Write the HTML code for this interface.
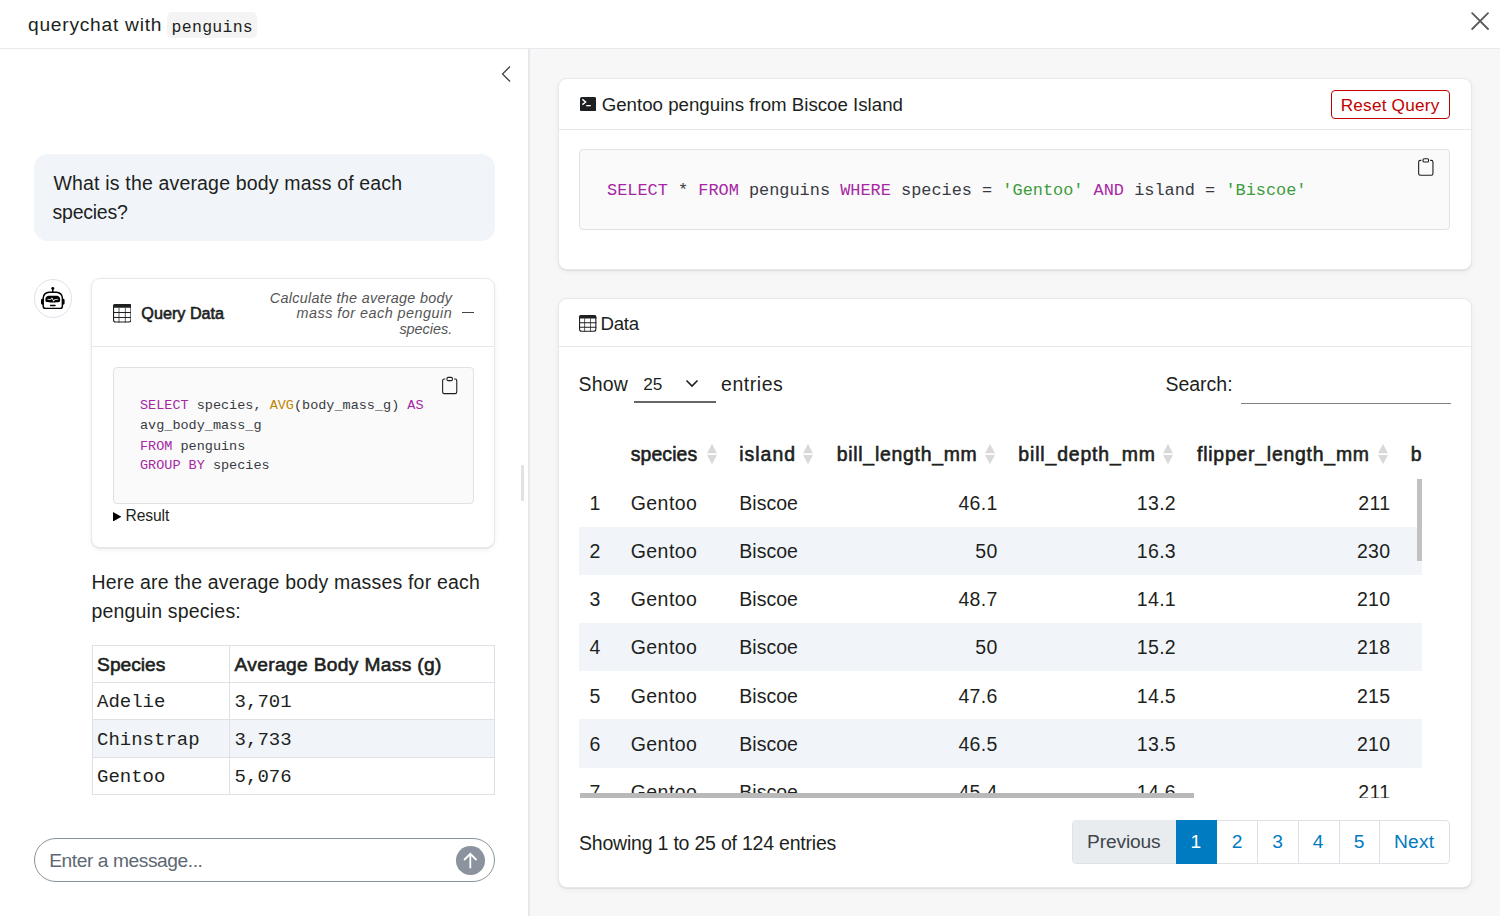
<!DOCTYPE html>
<html><head><meta charset="utf-8"><title>querychat</title>
<style>
html,body{margin:0;padding:0;}
body{width:1500px;height:916px;position:relative;overflow:hidden;background:#fff;font-family:"Liberation Sans",sans-serif;}
.t{position:absolute;white-space:nowrap;line-height:1;}
svg{display:block;}
</style></head><body>
<div style="position:absolute;left:0px;top:0px;width:1500px;height:49px;box-sizing:border-box;background:#fff;border-bottom:1px solid #e6eaee;"></div>
<div class="t" style="left:28px;top:14.75px;font-size:19.2px;color:#1d1f21;font-weight:400;font-family:'Liberation Sans', sans-serif;letter-spacing:0.75px;">querychat with</div>
<div style="position:absolute;left:167px;top:12.1px;width:90px;height:26.4px;box-sizing:border-box;background:#f4f4f4;border-radius:5px;"></div>
<div class="t" style="left:171.6px;top:19.65px;font-size:16.5px;color:#1d1f21;font-weight:400;font-family:'Liberation Mono', monospace;letter-spacing:0.28px;">penguins</div>
<svg style="position:absolute;left:1470.5px;top:12px;" width="18" height="18" viewBox="0 0 18 18"><path d="M1.2 1.2L17 17M17 1.2L1.2 17" stroke="#5a5a5a" stroke-width="1.8" fill="none" stroke-linecap="round"/></svg>
<div style="position:absolute;left:0px;top:49px;width:529px;height:867px;box-sizing:border-box;background:#fff;"></div>
<svg style="position:absolute;left:500px;top:65px;" width="12" height="18" viewBox="0 0 12 18"><path d="M10 1.5L2.5 9L10 16.5" stroke="#444" stroke-width="1.3" fill="none"/></svg>
<div style="position:absolute;left:34px;top:154px;width:460.5px;height:86.5px;box-sizing:border-box;background:#f1f5f9;border-radius:14px;"></div>
<div class="t" style="left:53.5px;top:173.99px;font-size:19.5px;color:#1d1f21;font-weight:400;font-family:'Liberation Sans', sans-serif;letter-spacing:0.17px;">What is the average body mass of each</div>
<div class="t" style="left:52.5px;top:202.99px;font-size:19.5px;color:#1d1f21;font-weight:400;font-family:'Liberation Sans', sans-serif;letter-spacing:-0.23px;">species?</div>
<div style="position:absolute;left:34px;top:279.4px;width:38.2px;height:38.2px;box-sizing:border-box;border:1px solid #dde3ea;border-radius:50%;background:#fff;"></div>
<svg style="position:absolute;left:41.2px;top:286.8px;fill:#000;" width="23.6" height="23.6" viewBox="0 0 16 16"><path d="M6 12.5a.5.5 0 0 1 .5-.5h3a.5.5 0 0 1 0 1h-3a.5.5 0 0 1-.5-.5M3 8.062C3 6.76 4.235 5.765 5.53 5.886a26.6 26.6 0 0 0 4.94 0C11.765 5.765 13 6.76 13 8.062v1.157a.93.93 0 0 1-.765.935c-.845.147-2.34.346-4.235.346s-3.39-.2-4.235-.346A.93.93 0 0 1 3 9.219zm4.542-.827a.25.25 0 0 0-.217.068l-.92.9a25 25 0 0 1-1.871-.183.25.25 0 0 0-.068.495c.55.076 1.232.149 2.02.193a.25.25 0 0 0 .189-.071l.754-.736.847 1.71a.25.25 0 0 0 .404.062l.932-.97a25 25 0 0 0 1.922-.188.25.25 0 0 0-.068-.495c-.538.074-1.207.145-1.98.189a.25.25 0 0 0-.166.076l-.754.785-.842-1.7a.25.25 0 0 0-.182-.135"/><path d="M8.5 1.866a1 1 0 1 0-1 0V3h-2A4.5 4.5 0 0 0 1 7.5V8a1 1 0 0 0-1 1v2a1 1 0 0 0 1 1v1a2 2 0 0 0 2 2h10a2 2 0 0 0 2-2v-1a1 1 0 0 0 1-1V9a1 1 0 0 0-1-1v-.5A4.5 4.5 0 0 0 10.5 3h-2zM14 7.5V13a1 1 0 0 1-1 1H3a1 1 0 0 1-1-1V7.5A3.5 3.5 0 0 1 5.5 4h5A3.5 3.5 0 0 1 14 7.5"/></svg>
<div style="position:absolute;left:90.8px;top:278.4px;width:404.4px;height:269.8px;box-sizing:border-box;background:#fff;border:1px solid rgba(0,0,0,0.09);border-radius:9px;box-shadow:0 1px 1px rgba(0,0,0,0.07),0 2px 6px rgba(0,0,0,0.05);"></div>
<div style="position:absolute;left:91.8px;top:346px;width:402.4px;height:1px;box-sizing:border-box;background:#e8e8e8;"></div>
<svg style="position:absolute;left:112.6px;top:304px;" width="18.5" height="18.5" viewBox="0 0 18.5 18.5"><rect x="0.55" y="0.55" width="17.4" height="17.4" rx="2" fill="none" stroke="#1d1f21" stroke-width="1.1"/><path d="M0 2.2A2.2 2.2 0 0 1 2.2 0H16.3A2.2 2.2 0 0 1 18.5 2.2V3.7H0Z" fill="#1d1f21"/><rect x="5.5625" y="3.7" width="0.9" height="14.8" fill="#1d1f21" opacity="0.8"/><rect x="11.852500000000001" y="3.7" width="0.9" height="14.8" fill="#1d1f21" opacity="0.8"/><rect x="0" y="8.010000000000002" width="18.5" height="1" fill="#1d1f21"/><rect x="0" y="12.968" width="18.5" height="1" fill="#1d1f21"/></svg>
<div class="t" style="left:141.3px;top:304.89px;font-size:16.2px;color:#1d1f21;font-weight:400;font-family:'Liberation Sans', sans-serif;letter-spacing:0.0px;-webkit-text-stroke:0.6px #1d1f21;">Query Data</div>
<div class="t" style="right:1047.8px;top:291.11px;font-size:14.4px;color:#555;font-weight:400;font-style:italic;font-family:'Liberation Sans', sans-serif;letter-spacing:0.28px;">Calculate the average body</div>
<div class="t" style="right:1047.8px;top:306.41px;font-size:14.4px;color:#555;font-weight:400;font-style:italic;font-family:'Liberation Sans', sans-serif;letter-spacing:0.48px;">mass for each penguin</div>
<div class="t" style="right:1047.8px;top:322.01px;font-size:14.4px;color:#555;font-weight:400;font-style:italic;font-family:'Liberation Sans', sans-serif;letter-spacing:0.0px;">species.</div>
<div style="position:absolute;left:462.3px;top:311.9px;width:11.4px;height:1.5px;box-sizing:border-box;background:#444;"></div>
<div style="position:absolute;left:112.5px;top:367px;width:361.5px;height:136.7px;box-sizing:border-box;background:#fafafa;border:1px solid #dee2e6;border-radius:4px;"></div>
<svg style="position:absolute;left:441.2px;top:375.5px;fill:#1d1f21;" width="17.4" height="19" viewBox="0 0 16 16"><path d="M4 1.5H3a2 2 0 0 0-2 2V14a2 2 0 0 0 2 2h10a2 2 0 0 0 2-2V3.5a2 2 0 0 0-2-2h-1v1h1a1 1 0 0 1 1 1V14a1 1 0 0 1-1 1H3a1 1 0 0 1-1-1V3.5a1 1 0 0 1 1-1h1z"/><path d="M9.5 1a.5.5 0 0 1 .5.5v1a.5.5 0 0 1-.5.5h-3a.5.5 0 0 1-.5-.5v-1a.5.5 0 0 1 .5-.5zm-3-1A1.5 1.5 0 0 0 5 1.5v1A1.5 1.5 0 0 0 6.5 4h3A1.5 1.5 0 0 0 11 2.5v-1A1.5 1.5 0 0 0 9.5 0z"/></svg>
<div class="t" style="left:140px;top:399.15px;font-size:13.5px;color:#383a42;font-weight:400;font-family:'Liberation Mono', monospace;letter-spacing:0px;white-space:pre;"><span style="color:#a626a4">SELECT</span><span style="color:#383a42"> species, </span><span style="color:#c18401">AVG</span><span style="color:#383a42">(body_mass_g) </span><span style="color:#a626a4">AS</span></div>
<div class="t" style="left:140px;top:419.35px;font-size:13.5px;color:#383a42;font-weight:400;font-family:'Liberation Mono', monospace;letter-spacing:0px;white-space:pre;"><span style="color:#383a42">avg_body_mass_g</span></div>
<div class="t" style="left:140px;top:439.65px;font-size:13.5px;color:#383a42;font-weight:400;font-family:'Liberation Mono', monospace;letter-spacing:0px;white-space:pre;"><span style="color:#a626a4">FROM</span><span style="color:#383a42"> penguins</span></div>
<div class="t" style="left:140px;top:459.35px;font-size:13.5px;color:#383a42;font-weight:400;font-family:'Liberation Mono', monospace;letter-spacing:0px;white-space:pre;"><span style="color:#a626a4">GROUP BY</span><span style="color:#383a42"> species</span></div>
<svg style="position:absolute;left:112.7px;top:511.5px;" width="8.5" height="9.5" viewBox="0 0 8.5 9.5"><path d="M0 0L8.5 4.75L0 9.5Z" fill="#000"/></svg>
<div class="t" style="left:125.6px;top:508.29px;font-size:15.6px;color:#1d1f21;font-weight:400;font-family:'Liberation Sans', sans-serif;letter-spacing:-0.1px;">Result</div>
<div class="t" style="left:91.4px;top:572.99px;font-size:19.5px;color:#1d1f21;font-weight:400;font-family:'Liberation Sans', sans-serif;letter-spacing:0.2px;">Here are the average body masses for each</div>
<div class="t" style="left:91.4px;top:601.79px;font-size:19.5px;color:#1d1f21;font-weight:400;font-family:'Liberation Sans', sans-serif;letter-spacing:0.2px;">penguin species:</div>
<div style="position:absolute;left:92.3px;top:644.7px;width:402.5px;height:150px;box-sizing:border-box;border:1px solid #dee2e6;background:#fff;"></div>
<div style="position:absolute;left:92.8px;top:719.5px;width:401.5px;height:37.5px;box-sizing:border-box;background:#f1f5f9;"></div>
<div style="position:absolute;left:92.3px;top:682px;width:402.5px;height:1px;box-sizing:border-box;background:#dee2e6;"></div>
<div style="position:absolute;left:92.3px;top:719.3px;width:402.5px;height:1px;box-sizing:border-box;background:#dee2e6;"></div>
<div style="position:absolute;left:92.3px;top:756.8px;width:402.5px;height:1px;box-sizing:border-box;background:#dee2e6;"></div>
<div style="position:absolute;left:229px;top:644.7px;width:1px;height:150px;box-sizing:border-box;background:#dee2e6;"></div>
<div class="t" style="left:97.1px;top:655.05px;font-size:19.2px;color:#1d1f21;font-weight:400;font-family:'Liberation Sans', sans-serif;letter-spacing:0px;-webkit-text-stroke:0.6px #1d1f21;">Species</div>
<div class="t" style="left:234.6px;top:655.05px;font-size:19.2px;color:#1d1f21;font-weight:400;font-family:'Liberation Sans', sans-serif;letter-spacing:0.33px;-webkit-text-stroke:0.6px #1d1f21;">Average Body Mass (g)</div>
<div class="t" style="left:97px;top:693.44px;font-size:19px;color:#1d1f21;font-weight:400;font-family:'Liberation Mono', monospace;letter-spacing:0px;">Adelie</div>
<div class="t" style="left:234.6px;top:693.44px;font-size:19px;color:#1d1f21;font-weight:400;font-family:'Liberation Mono', monospace;letter-spacing:0px;">3,701</div>
<div class="t" style="left:97px;top:730.74px;font-size:19px;color:#1d1f21;font-weight:400;font-family:'Liberation Mono', monospace;letter-spacing:0px;">Chinstrap</div>
<div class="t" style="left:234.6px;top:730.74px;font-size:19px;color:#1d1f21;font-weight:400;font-family:'Liberation Mono', monospace;letter-spacing:0px;">3,733</div>
<div class="t" style="left:97px;top:768.04px;font-size:19px;color:#1d1f21;font-weight:400;font-family:'Liberation Mono', monospace;letter-spacing:0px;">Gentoo</div>
<div class="t" style="left:234.6px;top:768.04px;font-size:19px;color:#1d1f21;font-weight:400;font-family:'Liberation Mono', monospace;letter-spacing:0px;">5,076</div>
<div style="position:absolute;left:34px;top:838px;width:460.7px;height:44px;box-sizing:border-box;border:1px solid #8a939c;border-radius:22px;background:#fff;"></div>
<div class="t" style="left:49.2px;top:851.05px;font-size:19.2px;color:#5d6873;font-weight:400;font-family:'Liberation Sans', sans-serif;letter-spacing:-0.43px;">Enter a message...</div>
<div style="position:absolute;left:456.4px;top:846.2px;width:28.6px;height:28.6px;box-sizing:border-box;background:#8b949e;border-radius:50%;"></div>
<svg style="position:absolute;left:456.4px;top:846.2px;" width="28.6" height="28.6" viewBox="0 0 28.6 28.6"><path d="M14.3 21.5V8M8.6 13.5L14.3 7.8L20 13.5" stroke="#fff" stroke-width="1.8" fill="none" stroke-linecap="round"/></svg>
<div style="position:absolute;left:521.3px;top:465px;width:2.4px;height:35.7px;box-sizing:border-box;background:#e2e2e2;border-radius:1.2px;"></div>
<div style="position:absolute;left:529px;top:49px;width:971px;height:867px;box-sizing:border-box;background:#f7f7f7;"></div>
<div style="position:absolute;left:528.4px;top:49px;width:1.4px;height:867px;box-sizing:border-box;background:#e6e9ec;"></div>
<div style="position:absolute;left:558px;top:77.8px;width:914px;height:192.2px;box-sizing:border-box;background:#fff;border:1px solid rgba(0,0,0,0.09);border-radius:9px;box-shadow:0 1px 1px rgba(0,0,0,0.07),0 2px 6px rgba(0,0,0,0.05);"></div>
<div style="position:absolute;left:559px;top:129px;width:912px;height:1px;box-sizing:border-box;background:#e8e8e8;"></div>
<svg style="position:absolute;left:579.8px;top:96.8px;" width="16.2" height="14.4" viewBox="0 0 16.2 14.4"><rect x="0" y="0" width="16.2" height="14.4" rx="2" fill="#1d1f21"/><path d="M2.4 2.4L5.6 5L2.4 7.6" stroke="#fff" stroke-width="1.4" fill="none"/><rect x="6.2" y="8" width="4.6" height="1.3" fill="#fff"/></svg>
<div class="t" style="left:601.7px;top:95.87px;font-size:18.7px;color:#1d1f21;font-weight:400;font-family:'Liberation Sans', sans-serif;letter-spacing:0px;">Gentoo penguins from Biscoe Island</div>
<div style="position:absolute;left:1331.3px;top:90.2px;width:118.7px;height:28.5px;box-sizing:border-box;border:1px solid #c10000;border-radius:4px;"></div>
<div class="t" style="left:1340.7px;top:96.94px;font-size:17.2px;color:#c10000;font-weight:400;font-family:'Liberation Sans', sans-serif;letter-spacing:0.21px;">Reset Query</div>
<div style="position:absolute;left:579.3px;top:149px;width:870.7px;height:81px;box-sizing:border-box;background:#fafafa;border:1px solid #dee2e6;border-radius:4px;"></div>
<svg style="position:absolute;left:1417.4px;top:157px;fill:#1d1f21;" width="17.6" height="20" viewBox="0 0 16 16"><path d="M4 1.5H3a2 2 0 0 0-2 2V14a2 2 0 0 0 2 2h10a2 2 0 0 0 2-2V3.5a2 2 0 0 0-2-2h-1v1h1a1 1 0 0 1 1 1V14a1 1 0 0 1-1 1H3a1 1 0 0 1-1-1V3.5a1 1 0 0 1 1-1h1z"/><path d="M9.5 1a.5.5 0 0 1 .5.5v1a.5.5 0 0 1-.5.5h-3a.5.5 0 0 1-.5-.5v-1a.5.5 0 0 1 .5-.5zm-3-1A1.5 1.5 0 0 0 5 1.5v1A1.5 1.5 0 0 0 6.5 4h3A1.5 1.5 0 0 0 11 2.5v-1A1.5 1.5 0 0 0 9.5 0z"/></svg>
<div class="t" style="left:607px;top:182.55px;font-size:16.9px;color:#383a42;font-weight:400;font-family:'Liberation Mono', monospace;letter-spacing:0px;white-space:pre;"><span style="color:#a626a4">SELECT</span><span style="color:#383a42"> * </span><span style="color:#a626a4">FROM</span><span style="color:#383a42"> penguins </span><span style="color:#a626a4">WHERE</span><span style="color:#383a42"> species = </span><span style="color:#3d9c3d">'Gentoo'</span><span style="color:#383a42"> </span><span style="color:#a626a4">AND</span><span style="color:#383a42"> island = </span><span style="color:#3d9c3d">'Biscoe'</span></div>
<div style="position:absolute;left:558px;top:297.8px;width:914px;height:589.9px;box-sizing:border-box;background:#fff;border:1px solid rgba(0,0,0,0.09);border-radius:9px;box-shadow:0 1px 1px rgba(0,0,0,0.07),0 2px 6px rgba(0,0,0,0.05);"></div>
<div style="position:absolute;left:559px;top:346px;width:912px;height:1px;box-sizing:border-box;background:#e8e8e8;"></div>
<svg style="position:absolute;left:579.4px;top:315px;" width="17.4" height="16.8" viewBox="0 0 17.4 16.8"><rect x="0.55" y="0.55" width="16.299999999999997" height="15.700000000000001" rx="2" fill="none" stroke="#1d1f21" stroke-width="1.1"/><path d="M0 2.2A2.2 2.2 0 0 1 2.2 0H15.2A2.2 2.2 0 0 1 17.4 2.2V3.4H0Z" fill="#1d1f21"/><rect x="5.204999999999999" y="3.4" width="0.9" height="13.4" fill="#1d1f21" opacity="0.8"/><rect x="11.121" y="3.4" width="0.9" height="13.4" fill="#1d1f21" opacity="0.8"/><rect x="0" y="7.255000000000001" width="17.4" height="1" fill="#1d1f21"/><rect x="0" y="11.744000000000002" width="17.4" height="1" fill="#1d1f21"/></svg>
<div class="t" style="left:600.4px;top:315.17px;font-size:18.7px;color:#1d1f21;font-weight:400;font-family:'Liberation Sans', sans-serif;letter-spacing:-0.23px;">Data</div>
<div class="t" style="left:578.6px;top:374.99px;font-size:19.5px;color:#1d1f21;font-weight:400;font-family:'Liberation Sans', sans-serif;letter-spacing:0.13px;">Show</div>
<div class="t" style="left:643.3px;top:376.44px;font-size:17.2px;color:#1d1f21;font-weight:400;font-family:'Liberation Sans', sans-serif;letter-spacing:0px;">25</div>
<svg style="position:absolute;left:685px;top:378px;" width="14" height="10" viewBox="0 0 14 10"><path d="M1.5 2.5L7 8L12.5 2.5" stroke="#1d1f21" stroke-width="1.6" fill="none"/></svg>
<div style="position:absolute;left:634px;top:401px;width:82px;height:1.5px;box-sizing:border-box;background:#666;"></div>
<div class="t" style="left:721px;top:374.99px;font-size:19.5px;color:#1d1f21;font-weight:400;font-family:'Liberation Sans', sans-serif;letter-spacing:0.55px;">entries</div>
<div class="t" style="left:1165.4px;top:375.49px;font-size:19.5px;color:#1d1f21;font-weight:400;font-family:'Liberation Sans', sans-serif;letter-spacing:0px;">Search:</div>
<div style="position:absolute;left:1241px;top:402.5px;width:210px;height:1.5px;box-sizing:border-box;background:#808080;"></div>
<div style="position:absolute;left:579px;top:430px;width:843px;height:367.5px;overflow:hidden;">
<div class="t" style="left:10.5px;top:64.09px;font-size:19.5px;color:#1d1f21;font-weight:400;letter-spacing:0px;">1</div>
<div class="t" style="left:51.700000000000045px;top:64.09px;font-size:19.5px;color:#1d1f21;font-weight:400;letter-spacing:0.45px;">Gentoo</div>
<div class="t" style="left:160.29999999999995px;top:64.09px;font-size:19.5px;color:#1d1f21;font-weight:400;letter-spacing:0.0px;">Biscoe</div>
<div class="t" style="right:424.4px;top:64.09px;font-size:19.5px;color:#1d1f21;font-weight:400;letter-spacing:0.3px;">46.1</div>
<div class="t" style="right:246px;top:64.09px;font-size:19.5px;color:#1d1f21;font-weight:400;letter-spacing:0.3px;">13.2</div>
<div class="t" style="right:31.700000000000045px;top:64.09px;font-size:19.5px;color:#1d1f21;font-weight:400;letter-spacing:0.3px;">211</div>
<div style="position:absolute;left:0;top:96.93px;width:843px;height:48.13px;background:#f1f5f9;"></div>
<div class="t" style="left:10.5px;top:112.22px;font-size:19.5px;color:#1d1f21;font-weight:400;letter-spacing:0px;">2</div>
<div class="t" style="left:51.700000000000045px;top:112.22px;font-size:19.5px;color:#1d1f21;font-weight:400;letter-spacing:0.45px;">Gentoo</div>
<div class="t" style="left:160.29999999999995px;top:112.22px;font-size:19.5px;color:#1d1f21;font-weight:400;letter-spacing:0.0px;">Biscoe</div>
<div class="t" style="right:424.4px;top:112.22px;font-size:19.5px;color:#1d1f21;font-weight:400;letter-spacing:0.3px;">50</div>
<div class="t" style="right:246px;top:112.22px;font-size:19.5px;color:#1d1f21;font-weight:400;letter-spacing:0.3px;">16.3</div>
<div class="t" style="right:31.700000000000045px;top:112.22px;font-size:19.5px;color:#1d1f21;font-weight:400;letter-spacing:0.3px;">230</div>
<div class="t" style="left:10.5px;top:160.35px;font-size:19.5px;color:#1d1f21;font-weight:400;letter-spacing:0px;">3</div>
<div class="t" style="left:51.700000000000045px;top:160.35px;font-size:19.5px;color:#1d1f21;font-weight:400;letter-spacing:0.45px;">Gentoo</div>
<div class="t" style="left:160.29999999999995px;top:160.35px;font-size:19.5px;color:#1d1f21;font-weight:400;letter-spacing:0.0px;">Biscoe</div>
<div class="t" style="right:424.4px;top:160.35px;font-size:19.5px;color:#1d1f21;font-weight:400;letter-spacing:0.3px;">48.7</div>
<div class="t" style="right:246px;top:160.35px;font-size:19.5px;color:#1d1f21;font-weight:400;letter-spacing:0.3px;">14.1</div>
<div class="t" style="right:31.700000000000045px;top:160.35px;font-size:19.5px;color:#1d1f21;font-weight:400;letter-spacing:0.3px;">210</div>
<div style="position:absolute;left:0;top:193.19px;width:843px;height:48.13px;background:#f1f5f9;"></div>
<div class="t" style="left:10.5px;top:208.48px;font-size:19.5px;color:#1d1f21;font-weight:400;letter-spacing:0px;">4</div>
<div class="t" style="left:51.700000000000045px;top:208.48px;font-size:19.5px;color:#1d1f21;font-weight:400;letter-spacing:0.45px;">Gentoo</div>
<div class="t" style="left:160.29999999999995px;top:208.48px;font-size:19.5px;color:#1d1f21;font-weight:400;letter-spacing:0.0px;">Biscoe</div>
<div class="t" style="right:424.4px;top:208.48px;font-size:19.5px;color:#1d1f21;font-weight:400;letter-spacing:0.3px;">50</div>
<div class="t" style="right:246px;top:208.48px;font-size:19.5px;color:#1d1f21;font-weight:400;letter-spacing:0.3px;">15.2</div>
<div class="t" style="right:31.700000000000045px;top:208.48px;font-size:19.5px;color:#1d1f21;font-weight:400;letter-spacing:0.3px;">218</div>
<div class="t" style="left:10.5px;top:256.61px;font-size:19.5px;color:#1d1f21;font-weight:400;letter-spacing:0px;">5</div>
<div class="t" style="left:51.700000000000045px;top:256.61px;font-size:19.5px;color:#1d1f21;font-weight:400;letter-spacing:0.45px;">Gentoo</div>
<div class="t" style="left:160.29999999999995px;top:256.61px;font-size:19.5px;color:#1d1f21;font-weight:400;letter-spacing:0.0px;">Biscoe</div>
<div class="t" style="right:424.4px;top:256.61px;font-size:19.5px;color:#1d1f21;font-weight:400;letter-spacing:0.3px;">47.6</div>
<div class="t" style="right:246px;top:256.61px;font-size:19.5px;color:#1d1f21;font-weight:400;letter-spacing:0.3px;">14.5</div>
<div class="t" style="right:31.700000000000045px;top:256.61px;font-size:19.5px;color:#1d1f21;font-weight:400;letter-spacing:0.3px;">215</div>
<div style="position:absolute;left:0;top:289.45px;width:843px;height:48.13px;background:#f1f5f9;"></div>
<div class="t" style="left:10.5px;top:304.74px;font-size:19.5px;color:#1d1f21;font-weight:400;letter-spacing:0px;">6</div>
<div class="t" style="left:51.700000000000045px;top:304.74px;font-size:19.5px;color:#1d1f21;font-weight:400;letter-spacing:0.45px;">Gentoo</div>
<div class="t" style="left:160.29999999999995px;top:304.74px;font-size:19.5px;color:#1d1f21;font-weight:400;letter-spacing:0.0px;">Biscoe</div>
<div class="t" style="right:424.4px;top:304.74px;font-size:19.5px;color:#1d1f21;font-weight:400;letter-spacing:0.3px;">46.5</div>
<div class="t" style="right:246px;top:304.74px;font-size:19.5px;color:#1d1f21;font-weight:400;letter-spacing:0.3px;">13.5</div>
<div class="t" style="right:31.700000000000045px;top:304.74px;font-size:19.5px;color:#1d1f21;font-weight:400;letter-spacing:0.3px;">210</div>
<div class="t" style="left:10.5px;top:352.87px;font-size:19.5px;color:#1d1f21;font-weight:400;letter-spacing:0px;">7</div>
<div class="t" style="left:51.700000000000045px;top:352.87px;font-size:19.5px;color:#1d1f21;font-weight:400;letter-spacing:0.45px;">Gentoo</div>
<div class="t" style="left:160.29999999999995px;top:352.87px;font-size:19.5px;color:#1d1f21;font-weight:400;letter-spacing:0.0px;">Biscoe</div>
<div class="t" style="right:424.4px;top:352.87px;font-size:19.5px;color:#1d1f21;font-weight:400;letter-spacing:0.3px;">45.4</div>
<div class="t" style="right:246px;top:352.87px;font-size:19.5px;color:#1d1f21;font-weight:400;letter-spacing:0.3px;">14.6</div>
<div class="t" style="right:31.700000000000045px;top:352.87px;font-size:19.5px;color:#1d1f21;font-weight:400;letter-spacing:0.3px;">211</div>
</div>
<div class="t" style="left:630.7px;top:445.08px;font-size:19.4px;color:#1d1f21;font-weight:400;font-family:'Liberation Sans', sans-serif;letter-spacing:0.13px;-webkit-text-stroke:0.6px #1d1f21;">species</div>
<svg style="position:absolute;left:706.7px;top:444.2px;" width="10" height="20.5" viewBox="0 0 10 20.5"><path d="M5 0L10 9.3H0Z" fill="#d9d9d9"/><path d="M5 20.3L10 11H0Z" fill="#d9d9d9"/></svg>
<div class="t" style="left:739.3px;top:445.08px;font-size:19.4px;color:#1d1f21;font-weight:400;font-family:'Liberation Sans', sans-serif;letter-spacing:1.0px;-webkit-text-stroke:0.6px #1d1f21;">island</div>
<svg style="position:absolute;left:803px;top:444.2px;" width="10" height="20.5" viewBox="0 0 10 20.5"><path d="M5 0L10 9.3H0Z" fill="#d9d9d9"/><path d="M5 20.3L10 11H0Z" fill="#d9d9d9"/></svg>
<div class="t" style="left:836.7px;top:445.08px;font-size:19.4px;color:#1d1f21;font-weight:400;font-family:'Liberation Sans', sans-serif;letter-spacing:0.74px;-webkit-text-stroke:0.6px #1d1f21;">bill_length_mm</div>
<svg style="position:absolute;left:985px;top:444.2px;" width="10" height="20.5" viewBox="0 0 10 20.5"><path d="M5 0L10 9.3H0Z" fill="#d9d9d9"/><path d="M5 20.3L10 11H0Z" fill="#d9d9d9"/></svg>
<div class="t" style="left:1018.3px;top:445.08px;font-size:19.4px;color:#1d1f21;font-weight:400;font-family:'Liberation Sans', sans-serif;letter-spacing:0.87px;-webkit-text-stroke:0.6px #1d1f21;">bill_depth_mm</div>
<svg style="position:absolute;left:1162.7px;top:444.2px;" width="10" height="20.5" viewBox="0 0 10 20.5"><path d="M5 0L10 9.3H0Z" fill="#d9d9d9"/><path d="M5 20.3L10 11H0Z" fill="#d9d9d9"/></svg>
<div class="t" style="left:1197px;top:445.08px;font-size:19.4px;color:#1d1f21;font-weight:400;font-family:'Liberation Sans', sans-serif;letter-spacing:0.78px;-webkit-text-stroke:0.6px #1d1f21;">flipper_length_mm</div>
<svg style="position:absolute;left:1377.7px;top:444.2px;" width="10" height="20.5" viewBox="0 0 10 20.5"><path d="M5 0L10 9.3H0Z" fill="#d9d9d9"/><path d="M5 20.3L10 11H0Z" fill="#d9d9d9"/></svg>
<div class="t" style="left:1410.7px;top:445.08px;font-size:19.4px;color:#1d1f21;font-weight:400;font-family:'Liberation Sans', sans-serif;letter-spacing:0px;-webkit-text-stroke:0.6px #1d1f21;">b</div>
<div style="position:absolute;left:1416.7px;top:478.5px;width:5px;height:82px;box-sizing:border-box;background:#c1c1c1;border-radius:0;"></div>
<div style="position:absolute;left:579.5px;top:793px;width:614.5px;height:4.5px;box-sizing:border-box;background:#b9b9b9;"></div>
<div class="t" style="left:579px;top:834.29px;font-size:19.5px;color:#1d1f21;font-weight:400;font-family:'Liberation Sans', sans-serif;letter-spacing:-0.21px;">Showing 1 to 25 of 124 entries</div>
<div style="position:absolute;left:1072.2px;top:819.5px;width:378px;height:44px;box-sizing:border-box;border:1px solid #dee2e6;border-radius:4px;background:#fff;"></div>
<div style="position:absolute;left:1072.7px;top:820px;width:103px;height:43px;box-sizing:border-box;background:#e9ecef;border-radius:4px 0 0 4px;"></div>
<div style="position:absolute;left:1175.6px;top:819.5px;width:41.4px;height:44px;box-sizing:border-box;background:#007bc2;"></div>
<div style="position:absolute;left:1257.4px;top:820px;width:1px;height:43px;box-sizing:border-box;background:#dee2e6;"></div>
<div style="position:absolute;left:1297.8px;top:820px;width:1px;height:43px;box-sizing:border-box;background:#dee2e6;"></div>
<div style="position:absolute;left:1338.9px;top:820px;width:1px;height:43px;box-sizing:border-box;background:#dee2e6;"></div>
<div style="position:absolute;left:1379.2px;top:820px;width:1px;height:43px;box-sizing:border-box;background:#dee2e6;"></div>
<div class="t" style="left:1087px;top:832.25px;font-size:19.2px;color:#40464c;font-weight:400;font-family:'Liberation Sans', sans-serif;letter-spacing:-0.14px;">Previous</div>
<div class="t" style="left:1190.5px;top:832.25px;font-size:19.2px;color:#fff;font-weight:400;font-family:'Liberation Sans', sans-serif;letter-spacing:0px;">1</div>
<div class="t" style="left:1231.8px;top:832.25px;font-size:19.2px;color:#007bc2;font-weight:400;font-family:'Liberation Sans', sans-serif;letter-spacing:0px;">2</div>
<div class="t" style="left:1272.3px;top:832.25px;font-size:19.2px;color:#007bc2;font-weight:400;font-family:'Liberation Sans', sans-serif;letter-spacing:0px;">3</div>
<div class="t" style="left:1312.8px;top:832.25px;font-size:19.2px;color:#007bc2;font-weight:400;font-family:'Liberation Sans', sans-serif;letter-spacing:0px;">4</div>
<div class="t" style="left:1353.8px;top:832.25px;font-size:19.2px;color:#007bc2;font-weight:400;font-family:'Liberation Sans', sans-serif;letter-spacing:0px;">5</div>
<div class="t" style="left:1394px;top:832.25px;font-size:19.2px;color:#007bc2;font-weight:400;font-family:'Liberation Sans', sans-serif;letter-spacing:0.2px;">Next</div>
</body></html>
